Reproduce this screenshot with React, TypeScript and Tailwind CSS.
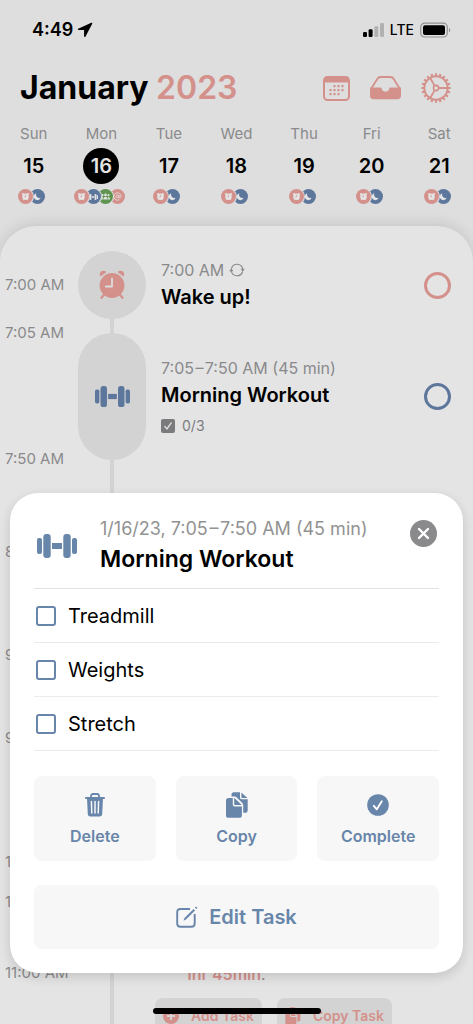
import type { ReactNode } from "react";

type BadgeKind = "alarm" | "moon" | "workout" | "people" | "at";

const days: { name: string; date: number; badges: BadgeKind[] }[] = [
  { name: "Sun", date: 15, badges: ["alarm", "moon"] },
  { name: "Mon", date: 16, badges: ["alarm", "workout", "people", "at"] },
  { name: "Tue", date: 17, badges: ["alarm", "moon"] },
  { name: "Wed", date: 18, badges: ["alarm", "moon"] },
  { name: "Thu", date: 19, badges: ["alarm", "moon"] },
  { name: "Fri", date: 20, badges: ["alarm", "moon"] },
  { name: "Sat", date: 21, badges: ["alarm", "moon"] },
];

const times = [
  { label: "7:00 AM", gap: "mt-6" },
  { label: "7:05 AM", gap: "mt-7" },
  { label: "7:50 AM", gap: "mt-[106px]" },
  { label: "8:00 AM", gap: "mt-[73px]" },
  { label: "9:00 AM", gap: "mt-[83px]" },
  { label: "9:30 AM", gap: "mt-[63px]" },
  { label: "10:00 AM", gap: "mt-[104px]" },
  { label: "10:15 AM", gap: "mt-5" },
  { label: "11:00 AM", gap: "mt-[51px]" },
];

const subtasks = ["Treadmill", "Weights", "Stretch"];

const badgeColors: Record<BadgeKind, string> = {
  alarm: "bg-[#d4918b]",
  moon: "bg-[#5d779c]",
  workout: "bg-[#5d779c]",
  people: "bg-[#5f9550]",
  at: "bg-[#d4918b]",
};

// earlier badges sit on top of later ones
const badgeLayers = ["z-40", "z-30", "z-20", "z-10"];

function AlarmIcon({ className }: { className?: string }) {
  return (
    <svg viewBox="0 0 26 30" className={className} aria-hidden="true">
      <g fill="currentColor">
        <path d="M1.5 6.4C.3 4.800.6 2.700 2 1.600c1.600-1.300 4-1.100 5.400.6z" />
        <path d="M24.500 6.400c1.200-1.600.9-3.700-.5-4.800-1.600-1.300-4-1.100-5.400.6z" />
        <circle cx="13" cy="15.5" r="12.4" />
      </g>
      <path
        d="M4.800 25 2.500 27.800M21.200 25l2.300 2.800"
        stroke="currentColor"
        strokeWidth="2.2"
        strokeLinecap="round"
      />
      <path
        d="M13 8.500v8H6.800"
        fill="none"
        stroke="#dcdcdc"
        strokeWidth="1.8"
        strokeLinecap="round"
        strokeLinejoin="round"
      />
    </svg>
  );
}

function DumbbellIcon({ className }: { className?: string }) {
  return (
    <svg viewBox="0 0 40 24" className={className} fill="currentColor" aria-hidden="true">
      <rect x="0" y="4" width="5" height="16" rx="2" />
      <rect x="6.3" y="0" width="7.4" height="24" rx="3" />
      <rect x="15" y="9" width="10" height="6" />
      <rect x="26.3" y="0" width="7.4" height="24" rx="3" />
      <rect x="35" y="4" width="5" height="16" rx="2" />
    </svg>
  );
}

function CopyIcon({ className }: { className?: string }) {
  return (
    <svg viewBox="0 0 22 26" className={className} fill="currentColor" aria-hidden="true">
      <path d="M5.500 3A2.600 2.600 0 0 1 8 .3h6v5.200c0 1 .6 1.700 1.700 1.700h6v11c0 1.700-1 2.600-2.700 2.600h-1.800v-7.200c0-1.300-.4-2.200-1.300-3.100l-4.700-4.600C10.300 5 9.400 4.600 8 4.600H5.500z" />
      <path d="M15.400.6 21.400 6h-5.200c-.5 0-.8-.3-.8-.8z" />
      <path d="M0 8.500C0 6.800.9 5.900 2.600 5.900h4.200v6.600c0 1.300.7 2 2 2h7.100v8.700c0 1.800-.9 2.600-2.600 2.600H2.600C.9 25.800 0 25 0 23.200z" />
      <path d="M8.200 6.100c.4.1.7.3 1 .6l5.800 5.600c.3.3.5.5.6.8H9c-.5 0-.8-.3-.8-.8z" />
    </svg>
  );
}

function CalendarIcon() {
  const dots = [
    [11, 9], [15, 9], [19, 9],
    [7, 13], [11, 13], [15, 13], [19, 13],
    [7, 17], [11, 17], [15, 17],
  ];
  return (
    <svg viewBox="0 0 27 25" className="h-[25px] w-[27px]" aria-hidden="true">
      <rect x="1" y="1" width="25" height="23" rx="3.5" fill="none" stroke="currentColor" strokeWidth="2" />
      <path d="M1 6.500V4A3.500 3.500 0 0 1 4.500.5h18A3.500 3.500 0 0 1 26 4v2.500z" fill="currentColor" />
      {dots.map(([x, y]) => (
        <rect key={`${x}-${y}`} x={x - 0.6} y={y} width="2.2" height="2.2" rx="0.6" fill="currentColor" />
      ))}
    </svg>
  );
}

function TrayIcon() {
  return (
    <svg viewBox="0 0 31 24" className="h-6 w-[31px]" aria-hidden="true">
      <path
        d="M1 13 7.300 3C8 1.700 9 1 10.500 1h10c1.500 0 2.500.7 3.200 2L30 13"
        fill="none"
        stroke="currentColor"
        strokeWidth="1.8"
      />
      <path
        d="M0 11.500h10.300c.9 0 1.400.6 1.500 1.400.3 1.500 1.700 2.600 3.700 2.600s3.400-1.100 3.700-2.600c.1-.8.6-1.400 1.500-1.400H31v8c0 2.600-1.200 3.700-3.700 3.700H3.700C1.200 23.200 0 22.100 0 19.500z"
        fill="currentColor"
      />
    </svg>
  );
}

function GearIcon() {
  return (
    <svg viewBox="0 0 30 30" className="size-[30px]" fill="none" stroke="currentColor" aria-hidden="true">
      <circle cx="15" cy="15" r="11.7" strokeWidth="2" />
      <circle cx="15" cy="15" r="13.4" strokeWidth="2.6" pathLength="40" strokeDasharray="1 1" strokeDashoffset="0.5" />
      <circle cx="15" cy="15" r="2.6" strokeWidth="1.6" />
      <path d="M17.800 15h9M13.600 12.600 9.200 5M13.600 17.400 9.200 25" strokeWidth="1.8" />
    </svg>
  );
}

function BadgeGlyph({ kind }: { kind: BadgeKind }) {
  if (kind === "workout") return <DumbbellIcon className="h-[6px] w-[10px]" />;
  return (
    <svg viewBox="0 0 10 10" className="size-[9px]" fill="currentColor" aria-hidden="true">
      {kind === "alarm" && (
        <>
          <circle cx="5" cy="5.2" r="3.6" />
          <circle cx="2.2" cy="2.2" r="1.1" />
          <circle cx="7.8" cy="2.2" r="1.1" />
          <path d="M2.200 9 3 8M7.800 9 7 8" stroke="currentColor" />
          <path d="M5 3.400v2H3.600" fill="none" stroke="#d4918b" strokeWidth="0.7" />
        </>
      )}
      {kind === "moon" && <path d="M3.800 1.400A3.900 3.900 0 1 0 8.500 6.300 3.600 3.600 0 0 1 3.800 1.400z" />}
      {kind === "people" && (
        <>
          <circle cx="5" cy="3.2" r="1.5" />
          <circle cx="1.7" cy="3.4" r="1.2" />
          <circle cx="8.3" cy="3.4" r="1.2" />
          <path d="M2.600 8.200c0-3.800 4.800-3.800 4.800 0zM0 8.200c0-2 .8-3 2.300-3l-.4 3zM10 8.200c0-2-.8-3-2.300-3l.4 3z" />
        </>
      )}
      {kind === "at" && (
        <g fill="none" stroke="currentColor" strokeWidth="0.9">
          <circle cx="5" cy="5" r="1.6" />
          <path d="M6.700 3.300v2.400c0 1.300 2.400 1.200 2.400-.7A4.100 4.100 0 1 0 7 8.600" />
        </g>
      )}
    </svg>
  );
}

function StatusBar() {
  return (
    <div className="flex h-[60px] items-center justify-between pr-[22px] pl-8">
      <div className="flex items-center gap-1">
        <span className="text-lg font-semibold">4:49</span>
        <svg viewBox="0 0 16 16" className="size-4" fill="currentColor" aria-hidden="true">
          <path
            d="M14.600 1.400 1.500 7.300h6.300v7z"
            stroke="currentColor"
            strokeWidth="1.4"
            strokeLinejoin="round"
          />
        </svg>
      </div>
      <div className="flex items-center gap-[6px]">
        <svg viewBox="0 0 21 14" className="h-[14px] w-[21px]" fill="currentColor" aria-hidden="true">
          <rect x="0" y="9" width="4" height="5" rx="1.2" />
          <rect x="5.6" y="6.2" width="4" height="7.8" rx="1.2" />
          <rect x="11.3" y="3.2" width="4" height="10.8" rx="1.2" opacity=".2" />
          <rect x="17" y="0" width="4" height="14" rx="1.2" opacity=".2" />
        </svg>
        <span className="text-sm font-medium">LTE</span>
        <svg viewBox="0 0 31 16" className="h-4 w-[31px]" aria-hidden="true">
          <rect x=".7" y="1.2" width="26.6" height="13.8" rx="4" fill="none" stroke="#909090" strokeWidth="1.2" />
          <rect x="3" y="3.2" width="22" height="9.8" rx="2" />
          <path d="M29 6v4.500c1.700-.8 1.700-3.700 0-4.500z" fill="#909090" />
        </svg>
      </div>
    </div>
  );
}

function TaskRow({
  time,
  title,
  repeats,
  progress,
  height,
  ring,
}: {
  time: string;
  title: string;
  repeats?: boolean;
  progress?: string;
  height: string;
  ring: string;
}) {
  return (
    <div className={`flex items-center justify-between pr-[22px] ${height}`}>
      <div>
        <p className="flex items-center gap-[5px] text-base leading-6 text-[#8a8a8c]">
          {time}
          {repeats && (
            <svg viewBox="0 0 16 14" className="h-[14px] w-4" fill="none" stroke="currentColor" strokeWidth="1.2" aria-hidden="true">
              <path d="M2.400 5.500A5.800 5.800 0 0 1 13.700 6M13.600 8.500A5.800 5.800 0 0 1 2.300 8" />
              <path d="M11.600 5.800h4.200l-2.100 2.900zM.2 8.200h4.200L2.300 5.300z" fill="currentColor" stroke="none" />
            </svg>
          )}
        </p>
        <h2 className="text-xl leading-[30px] font-semibold">{title}</h2>
        {progress && (
          <p className="mt-1 flex items-center gap-[7px] text-sm leading-6 text-[#7b7b7d]">
            <svg viewBox="0 0 14 14" className="size-[14px]" aria-hidden="true">
              <rect width="14" height="14" rx="2" fill="#7b7b7d" />
              <path d="m3.800 7.400 2.200 2.500 4.200-6" fill="none" stroke="#e4e4e4" strokeWidth="1.3" strokeLinecap="round" />
            </svg>
            {progress}
          </p>
        )}
      </div>
      <input
        type="checkbox"
        aria-label={title}
        className={`size-[27px] shrink-0 appearance-none rounded-full border-[3px] ${ring}`}
      />
    </div>
  );
}

function ActionButton({ label, children }: { label: string; children: ReactNode }) {
  return (
    <button
      type="button"
      className="flex flex-1 flex-col items-center gap-1 rounded-lg bg-[#f7f7f7] pt-[15px] pb-[12px] text-base leading-[26px] font-semibold text-[#6885aa]"
    >
      <span className="flex h-7 items-center">{children}</span>
      {label}
    </button>
  );
}

function TaskSheet() {
  return (
    <section
      role="dialog"
      aria-label="Morning Workout"
      className="absolute inset-x-[10px] bottom-[51px] z-50 rounded-[28px] bg-white px-6 pb-6 shadow-[0_4px_12px_rgba(0,0,0,0.14)]"
    >
      <div className="flex h-24 border-b border-[#e2e2e2]">
        <DumbbellIcon className="mt-[41px] ml-[3px] h-6 w-10 text-[#6885aa]" />
        <div className="ml-[23px] flex-1 pt-[23px]">
          <p className="text-lg leading-[26px] whitespace-nowrap text-[#929292]">
            {"1/16/23, 7:05\u200a–\u200a7:50 AM (45 min)"}
          </p>
          <h2 className="text-[23px] leading-[34px] font-semibold">Morning Workout</h2>
        </div>
        <button type="button" aria-label="Close" className="mt-[27px] mr-[2px] size-[27px]">
          <svg viewBox="0 0 27 27" className="size-[27px]" aria-hidden="true">
            <circle cx="13.5" cy="13.5" r="13.5" fill="#8a8a8c" />
            <path d="m9 9 9 9M18 9l-9 9" stroke="#fff" strokeWidth="2.4" strokeLinecap="round" />
          </svg>
        </button>
      </div>

      <ul>
        {subtasks.map((name) => (
          <li key={name} className="border-b border-[#ebebeb]">
            <label className="flex h-[53px] items-center gap-3 pl-[2px] text-xl">
              <input
                type="checkbox"
                className="size-5 appearance-none rounded-[3px] border-2 border-[#6885aa]"
              />
              {name}
            </label>
          </li>
        ))}
      </ul>

      <div className="mt-[25px] flex gap-5">
        <ActionButton label="Delete">
          <svg viewBox="0 0 20 24" className="h-6 w-5" aria-hidden="true">
            <path d="M6 4.500V3c0-1.200.8-2 2-2h4c1.200 0 2 .8 2 2v1.500" fill="none" stroke="currentColor" strokeWidth="1.8" />
            <path d="M1 5h18" stroke="currentColor" strokeWidth="2" strokeLinecap="round" />
            <path d="M2 5h16l-.8 16c-.1 1.600-1 2.400-2.500 2.400H5.300c-1.500 0-2.400-.8-2.500-2.400z" fill="currentColor" />
            <path d="m6.400 8.500.4 11.500M10 8.500V20M13.600 8.500 13.200 20" stroke="#f7f7f7" strokeWidth="1.5" strokeLinecap="round" />
          </svg>
        </ActionButton>
        <ActionButton label="Copy">
          <CopyIcon className="h-[26px] w-[22px]" />
        </ActionButton>
        <ActionButton label="Complete">
          <svg viewBox="0 0 22 22" className="size-[22px]" aria-hidden="true">
            <circle cx="11" cy="11" r="10.8" fill="currentColor" />
            <path d="m6.800 11.800 3 3.500 5-8" fill="none" stroke="#fff" strokeWidth="1.9" strokeLinecap="round" strokeLinejoin="round" />
          </svg>
        </ActionButton>
      </div>

      <button
        type="button"
        className="mt-6 flex h-16 w-full items-center justify-center gap-[11px] rounded-lg bg-[#f7f7f7] text-xl font-semibold text-[#6885aa]"
      >
        <svg viewBox="0 0 22 22" className="size-[22px]" fill="none" stroke="currentColor" aria-hidden="true">
          <path
            d="M14 3H4.500C2.300 3 1.200 4 1.200 6.200v11.200c0 2.200 1.100 3.300 3.300 3.300h10.900c2.200 0 3.300-1.100 3.300-3.300V8"
            strokeWidth="1.9"
          />
          <path d="M9 13 18.300 3.700M19.600 2.400l1.100-1.100" strokeWidth="2" />
          <path d="m7.600 14.600.7-2.400 1.600 1.600z" fill="currentColor" stroke="none" />
        </svg>
        Edit Task
      </button>
    </section>
  );
}

export default function App() {
  return (
    <main className="relative flex h-screen flex-col overflow-hidden bg-[#dedede] font-['Inter',sans-serif] text-black">
      <StatusBar />

      <header className="flex h-14 items-center justify-between pr-[22px] pl-5">
        <h1 className="text-[32px] font-bold">
          January <span className="font-semibold text-[#d4918b]">2023</span>
        </h1>
        <div className="flex items-center gap-5 text-[#d4918b]">
          <button type="button" aria-label="Calendar">
            <CalendarIcon />
          </button>
          <button type="button" aria-label="Inbox">
            <TrayIcon />
          </button>
          <button type="button" aria-label="Settings">
            <GearIcon />
          </button>
        </div>
      </header>

      <nav className="grid grid-cols-7 pt-2">
        {days.map((day) => (
          <button key={day.date} type="button" className="flex flex-col items-center">
            <span className="text-[15px] leading-5 text-[#8a8a8c]">{day.name}</span>
            <span
              className={`mt-1 flex size-9 items-center justify-center rounded-full text-xl font-semibold ${
                day.date === 16 ? "bg-black text-[#e4e4e4]" : ""
              }`}
            >
              {day.date}
            </span>
            <span className="mt-[5px] flex pr-1">
              {day.badges.map((kind, index) => (
                <span
                  key={kind}
                  className={`relative flex size-[15px] items-center justify-center rounded-full text-[#e4e4e4] ring-1 ring-[#dedede] not-first:-ml-[3px] ${badgeLayers[index]} ${badgeColors[kind]}`}
                >
                  <BadgeGlyph kind={kind} />
                </span>
              ))}
            </span>
          </button>
        ))}
      </nav>

      <section className="mt-[22px] flex min-h-0 flex-1 rounded-t-[36px] bg-[#e4e4e4] pt-[25px] shadow-[0_-3px_14px_rgba(0,0,0,0.1)]">
        <div className="flex w-[78px] shrink-0 flex-col pl-[5px] text-[15px] leading-5 whitespace-nowrap text-[#8a8a8c]">
          {times.map((time) => (
            <span key={time.label} className={time.gap}>
              {time.label}
            </span>
          ))}
        </div>

        <div className="flex w-[68px] shrink-0 flex-col items-center">
          <div className="flex size-[68px] shrink-0 items-center justify-center rounded-full bg-[#d3d3d3] text-[#d4918b]">
            <AlarmIcon className="h-[30px] w-[26px]" />
          </div>
          <div className="h-[14px] w-1 shrink-0 bg-[#d3d3d3]" />
          <div className="flex h-[127px] w-full shrink-0 items-center justify-center rounded-full bg-[#d3d3d3] text-[#5d779c]">
            <DumbbellIcon className="h-[21px] w-[35px]" />
          </div>
          <div className="w-1 flex-1 bg-[#d3d3d3]" />
        </div>

        <div className="flex flex-1 flex-col pl-[15px]">
          <TaskRow
            time="7:00 AM"
            title="Wake up!"
            repeats
            height="h-[68px] shrink-0"
            ring="border-[#d4918b]"
          />
          <TaskRow
            time={"7:05\u200a–\u200a7:50 AM (45 min)"}
            title="Morning Workout"
            progress="0/3"
            height="mt-[14px] h-[127px] shrink-0"
            ring="border-[#5d779c]"
          />
          <p className="mt-[504px] pl-6 text-base leading-5 text-[#8a8a8c]">
            <span className="font-semibold text-[#d4918b]">1hr 45min</span>.
          </p>
          <div className="-ml-[6px] mt-[14px] flex gap-[15px] text-sm font-semibold text-[#d4918b]">
            <button type="button" className="flex h-[35px] items-center gap-3 rounded-lg bg-[#d3d3d3] px-2">
              <svg viewBox="0 0 16 16" className="size-4" aria-hidden="true">
                <circle cx="8" cy="8" r="8" fill="currentColor" />
                <path d="M8 4v8M4 8h8" stroke="#d3d3d3" strokeWidth="2" />
              </svg>
              Add Task
            </button>
            <button type="button" className="flex h-[35px] items-center gap-3 rounded-lg bg-[#d3d3d3] px-2">
              <CopyIcon className="h-[18px] w-4" />
              Copy Task
            </button>
          </div>
        </div>
      </section>

      <TaskSheet />

      <div className="absolute bottom-[10px] left-1/2 z-50 h-[6px] w-[168px] -translate-x-1/2 rounded-full bg-black" />
    </main>
  );
}
